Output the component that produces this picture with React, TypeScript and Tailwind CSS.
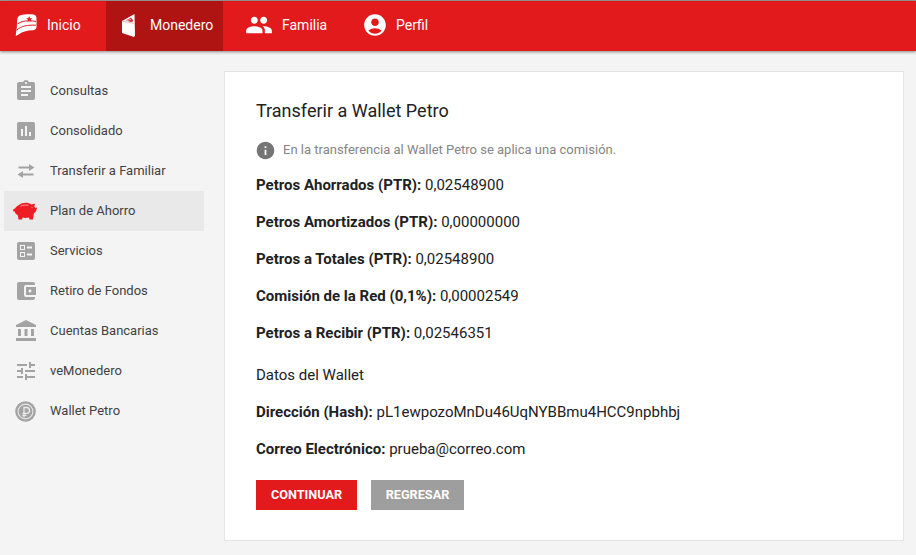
import type { ReactNode } from "react";
import {
  MdAccountBalance,
  MdAccountBalanceWallet,
  MdAccountCircle,
  MdAssessment,
  MdAssignment,
  MdBallot,
  MdInfo,
  MdPeople,
  MdTune,
} from "react-icons/md";

function FlagLogo() {
  return (
    <svg width="22" height="22" viewBox="0 0 22 22" fill="none">
      <path d="M5.5 1.2C9 .2 15 0 18.5.6 20.6 1 21.5 2.2 21.5 4.5v8c0 2.6-1.4 3.6-3.8 3.8-5 .3-9.5 1.2-13.5 3.6-1.4.8-2.6 1.6-3.4 2 0-2.6.6-5 .9-7.5.4-3.4.1-6.6.6-9.4.3-1.8 1.2-3.2 3.2-3.8z" fill="#fff" />
      <path d="M2.5 10C7 6.8 12 6.2 21 7.4M1.6 16.2C6 12 12.5 10.8 21 11.2" stroke="#e21a1c" strokeWidth="1" />
      <path d="M14.2 2l.9 2.2 2.3.1-1.8 1.4.7 2.2-2.1-1.3-1.9 1.3.6-2.2-1.8-1.4 2.3-.1z" fill="#e21a1c" />
    </svg>
  );
}

function WalletLogo() {
  return (
    <svg width="14" height="23" viewBox="0 0 14 23" fill="none">
      <path d="M0 7L12.5 0L13 21.5L12 23L0 19Z" fill="#fff" />
      <path d="M0.5 7.2L11.8 9.4" stroke="#e8a6ad" strokeWidth="0.8" />
      <path d="M4 6.5L9 3.6 11.5 7 9.5 8.2z" fill="#d8343a" />
      <path d="M5 6.6L9 5.2" stroke="#fff" strokeWidth="0.6" />
    </svg>
  );
}

function TransferIcon() {
  return (
    <svg width="20" height="14" viewBox="0 0 20 14" fill="#a3a3a3">
      <path d="M13 0l5.5 3.5L13 7V4.6H2.5V2.6H13z" />
      <path d="M7 7v2.4h10.5v2H7V14L1.5 10.4z" />
    </svg>
  );
}

function PiggyIcon() {
  return (
    <svg width="25" height="18" viewBox="0 0 25 18" fill="#ee1c25">
      <path d="M6 3C9 .5 15 0 18.5 2.5c1.5 0 2.6-.8 3.5-.6l-.8 2.5 1.6 1.6 1.4-.8-1 3.5c-.4 1.2-1.4 1.8-2.3 2.6L20 17.5h-3.5l-.5-2c-2.5.6-4.5.6-6.5 0l-.5 2H5.5l-.7-4.2C3.2 12.5 2 11 1.6 9.5L0 9.2l.4-2L2 6.5C2.8 5.2 4 4 6 3z" />
      <path d="M7.5 4.2C10 3 13 2.8 15.5 3.3" stroke="#f7b3b6" strokeWidth="0.8" fill="none" />
      <circle cx="19" cy="5.5" r="0.6" fill="#f7b3b6" />
    </svg>
  );
}

function PetroIcon() {
  return (
    <svg width="21" height="21" viewBox="0 0 21 21" fill="none">
      <circle cx="10.5" cy="10.5" r="10.3" fill="#a3a3a3" />
      <circle cx="10.5" cy="10.5" r="7.4" stroke="#e4e4e4" strokeWidth="1.1" />
      <path d="M9 16.5V6.5h2.6a2.9 2.9 0 010 5.8H7.5M7.5 14.3H11.5" stroke="#ececec" strokeWidth="1.3" />
    </svg>
  );
}

const sideItems: { label: string; icon: ReactNode; active?: boolean }[] = [
  { label: "Consultas", icon: <MdAssignment size={24} color="#a3a3a3" /> },
  { label: "Consolidado", icon: <MdAssessment size={24} color="#a3a3a3" /> },
  { label: "Transferir a Familiar", icon: <TransferIcon /> },
  { label: "Plan de Ahorro", icon: <PiggyIcon />, active: true },
  { label: "Servicios", icon: <MdBallot size={24} color="#a3a3a3" /> },
  { label: "Retiro de Fondos", icon: <MdAccountBalanceWallet size={24} color="#a3a3a3" /> },
  { label: "Cuentas Bancarias", icon: <MdAccountBalance size={24} color="#a3a3a3" /> },
  { label: "veMonedero", icon: <MdTune size={24} color="#a3a3a3" /> },
  { label: "Wallet Petro", icon: <PetroIcon /> },
];

const savings = [
  ["Petros Ahorrados (PTR):", "0,02548900"],
  ["Petros Amortizados (PTR):", "0,00000000"],
  ["Petros a Totales (PTR):", "0,02548900"],
  ["Comisión de la Red (0,1%):", "0,00002549"],
  ["Petros a Recibir (PTR):", "0,02546351"],
];

function Row({ label, value }: { label: string; value: string }) {
  return (
    <p className="h-[37px] text-[15px] leading-[37px] text-[#212121]">
      <strong className="font-bold">{label}</strong> {value}
    </p>
  );
}

export default function App() {
  return (
    <div className="flex h-[555px] w-[916px] flex-col overflow-hidden bg-[#f4f4f4] font-['Roboto',sans-serif]">
      <div className="h-px bg-[#9a9a9a]" />
      <nav className="flex h-[50px] items-stretch bg-[#e21a1c] text-[14px] text-white shadow-[0_1px_3px_rgba(0,0,0,0.45)]">
        <a className="flex w-[106px] items-center pb-[2px] pl-[15px]">
          <span className="w-[32px]"><FlagLogo /></span>
          Inicio
        </a>
        <a className="flex w-[117px] items-center bg-[#b01412] pb-[2px] pl-[16px]">
          <span className="w-[28px]"><WalletLogo /></span>
          Monedero
        </a>
        <a className="flex w-[141px] items-center pb-[2px] pl-[24px]">
          <span className="w-[35px]"><MdPeople size={28} className="-ml-[2px]" /></span>
          Familia
        </a>
        <a className="flex items-center pb-[2px]">
          <span className="w-[32px]"><MdAccountCircle size={26} className="-ml-[2px]" /></span>
          Perfil
        </a>
      </nav>

      <div className="flex flex-1 pt-[20px]">
        <aside className="w-[224px] pl-[4px]">
          {sideItems.map((item) => (
            <a
              key={item.label}
              className={`flex h-[40px] w-[200px] items-center text-[13px] text-[#424242] ${item.active ? "bg-[#e9e9e9]" : ""}`}
            >
              <span className="flex w-[46px] justify-center pr-[3px]">{item.icon}</span>
              {item.label}
            </a>
          ))}
        </aside>

        <main className="mb-[14px] h-[470px] w-[680px] border border-[#e4e4e4] bg-white pt-[28px] pl-[31px]">
          <h1 className="text-[18px] leading-[21px] font-normal text-[#212121]">Transferir a Wallet Petro</h1>
          <div className="mt-[19px] mb-[7px] flex h-[20px] items-center text-[13px] text-[#858585]">
            <MdInfo size={21} color="#757575" className="mr-[7px] -ml-[1px]" />
            En la transferencia al Wallet Petro se aplica una comisión.
          </div>
          {savings.map(([label, value]) => (
            <Row key={label} label={label} value={value} />
          ))}
          <h2 className="mt-[5px] h-[37px] text-[15px] leading-[37px] font-normal text-[#212121]">Datos del Wallet</h2>
          <Row label="Dirección (Hash):" value="pL1ewpozoMnDu46UqNYBBmu4HCC9npbhbj" />
          <Row label="Correo Electrónico:" value="prueba@correo.com" />
          <div className="mt-[12px] flex gap-[14px]">
            <button type="button" className="h-[30px] w-[101px] bg-[#e21a1c] text-[12.7px] font-bold text-white">
              CONTINUAR
            </button>
            <button type="button" className="h-[30px] w-[93px] bg-[#9e9e9e] text-[12.7px] font-bold text-white">
              REGRESAR
            </button>
          </div>
        </main>
      </div>
    </div>
  );
}
